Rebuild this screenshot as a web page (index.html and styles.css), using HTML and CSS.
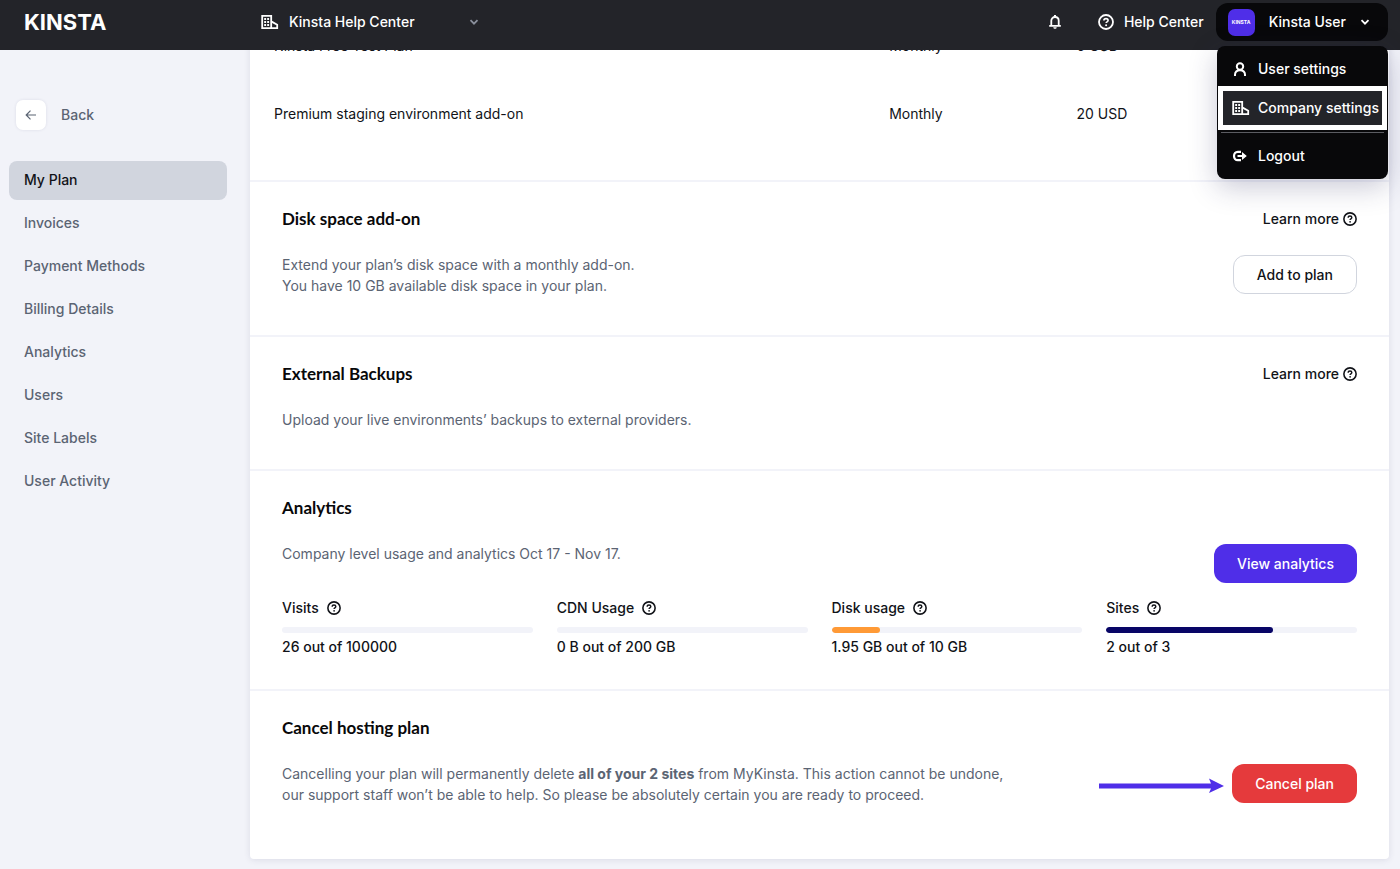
FILE: index.html
```html
<!DOCTYPE html>
<html lang="en">
<head>
    <meta charset="UTF-8">
    <meta name="viewport" content="width=device-width, initial-scale=1.0">
    <title>My Plan - MyKinsta</title>
    <link rel="stylesheet" href="styles.css">
</head>
<body>
    <!-- shared icons -->
    <svg class="sprite" aria-hidden="true">
        <symbol id="icon-company" viewBox="0 0 18 16">
            <path d="M1.2 1.8h9v12.4h-9zM10.2 7.4l6 3.4v3.4h-6" fill="none" stroke="currentColor" stroke-width="1.8"/>
            <path d="M3.2 4h1.900v1.900H3.200zM6.200 4h1.900v1.900H6.200zM3.200 7h1.900v1.900H3.200zM6.200 7h1.900v1.900H6.200zM3.200 10h1.900v1.900H3.200zM6.200 10h1.900v1.900H6.200z" fill="currentColor"/>
        </symbol>
        <symbol id="icon-help" viewBox="0 0 16 16">
            <circle cx="8" cy="8" r="7" fill="none" stroke="currentColor" stroke-width="1.8"/>
            <path d="M5.900 6.600c0-1.200.9-2 2.100-2s2.100.8 2.100 1.800c0 1.400-2 1.400-2 2.700" fill="none" stroke="currentColor" stroke-width="1.600"/>
            <circle cx="8.100" cy="11.200" r="1" fill="currentColor"/>
        </symbol>
        <symbol id="icon-chevron" viewBox="0 0 10 10">
            <path d="M1.5 3.2L5 6.7l3.5-3.5" fill="none" stroke="currentColor" stroke-width="1.8"/>
        </symbol>
    </svg>

    <header class="header">
        <a class="logo" href="#">KINSTA</a>
        <div class="company">
            <svg class="icon-company"><use href="#icon-company"/></svg>
            <select class="company-select" aria-label="Company">
                <option>Kinsta Help Center</option>
            </select>
            <svg class="icon-chevron"><use href="#icon-chevron"/></svg>
        </div>
        <div class="header-right">
            <button class="bell" type="button" aria-label="Notifications">
                <svg width="14" height="16" viewBox="0 0 14 16">
                    <path d="M1.2 11.8h11.6M3.3 11.5V6.7c0-2.2 1.6-3.7 3.7-3.7s3.7 1.5 3.7 3.7v4.8" fill="none" stroke="currentColor" stroke-width="1.8"/>
                    <path d="M6 1h2v2H6zM5.3 13.2h3.4c0 1-.7 1.6-1.7 1.6s-1.7-.6-1.7-1.6z" fill="currentColor"/>
                </svg>
            </button>
            <a class="help-link" href="#">
                <svg class="icon-help"><use href="#icon-help"/></svg>
                Help Center
            </a>
            <div class="user">
                <button class="user-button" type="button" aria-haspopup="true" aria-expanded="true">
                    <span class="avatar">KINSTA</span>
                    <span>Kinsta User</span>
                    <svg class="icon-chevron"><use href="#icon-chevron"/></svg>
                </button>
                <nav class="user-menu" aria-label="User">
                    <a class="menu-item" href="#">
                        <svg class="menu-icon" viewBox="0 0 18 16">
                            <circle cx="8" cy="5.5" r="3.2" fill="none" stroke="currentColor" stroke-width="2"/>
                            <path d="M3 15v-1.200c0-2.700 1.800-4.600 5-4.600s5 1.900 5 4.600V15" fill="none" stroke="currentColor" stroke-width="2"/>
                        </svg>
                        User settings
                    </a>
                    <a class="menu-item menu-item-active" href="#">
                        <svg class="menu-icon"><use href="#icon-company"/></svg>
                        Company settings
                    </a>
                    <a class="menu-item menu-item-logout" href="#">
                        <svg class="menu-icon" viewBox="0 0 18 16">
                            <path d="M9 3.800H5.800C3.500 3.800 2 5.700 2 8s1.500 4.200 3.800 4.200H9" fill="none" stroke="currentColor" stroke-width="2.200"/>
                            <path d="M5.500 7H10V4l4.800 4-4.800 4V9H5.500z" fill="currentColor"/>
                        </svg>
                        Logout
                    </a>
                </nav>
            </div>
        </div>
    </header>

    <div class="page">
        <aside class="sidebar">
            <a class="back" href="#">
                <span class="back-icon">
                    <svg width="12" height="12" viewBox="0 0 12 12">
                        <path d="M11 6H1.5M5.5 1.7L1.2 6l4.300 4.300" fill="none" stroke="currentColor" stroke-width="1.200"/>
                    </svg>
                </span>
                Back
            </a>
            <nav class="side-nav" aria-label="Company">
                <a class="active" href="#" aria-current="page">My Plan</a>
                <a href="#">Invoices</a>
                <a href="#">Payment Methods</a>
                <a href="#">Billing Details</a>
                <a href="#">Analytics</a>
                <a href="#">Users</a>
                <a href="#">Site Labels</a>
                <a href="#">User Activity</a>
            </nav>
        </aside>

        <main class="card">
            <section class="plans">
                <table>
                    <tr>
                        <td class="col-name">Kinsta Free Test Plan</td>
                        <td class="col-period">Monthly</td>
                        <td>0 USD</td>
                    </tr>
                    <tr>
                        <td>Premium staging environment add-on</td>
                        <td>Monthly</td>
                        <td>20 USD</td>
                    </tr>
                </table>
            </section>

            <section class="section">
                <div class="section-head">
                    <h2>Disk space add-on</h2>
                    <a class="learn-more" href="#">Learn more <svg class="icon-hint"><use href="#icon-help"/></svg></a>
                </div>
                <div class="section-body">
                    <p>Extend your plan’s disk space with a monthly add-on.<br>You have 10 GB available disk space in your plan.</p>
                    <button class="btn btn-outline" type="button">Add to plan</button>
                </div>
            </section>

            <section class="section">
                <div class="section-head">
                    <h2>External Backups</h2>
                    <a class="learn-more" href="#">Learn more <svg class="icon-hint"><use href="#icon-help"/></svg></a>
                </div>
                <div class="section-body">
                    <p>Upload your live environments’ backups to external providers.</p>
                </div>
            </section>

            <section class="section section-analytics">
                <div class="section-head">
                    <h2>Analytics</h2>
                </div>
                <div class="section-body">
                    <p>Company level usage and analytics Oct 17 - Nov 17.</p>
                    <button class="btn btn-primary" type="button">View analytics</button>
                </div>
                <div class="stats">
                    <div class="stat">
                        <div class="stat-label">Visits <svg class="icon-hint"><use href="#icon-help"/></svg></div>
                        <div class="bar"></div>
                        <div class="stat-value">26 out of 100000</div>
                    </div>
                    <div class="stat">
                        <div class="stat-label">CDN Usage <svg class="icon-hint"><use href="#icon-help"/></svg></div>
                        <div class="bar"></div>
                        <div class="stat-value">0 B out of 200 GB</div>
                    </div>
                    <div class="stat">
                        <div class="stat-label">Disk usage <svg class="icon-hint"><use href="#icon-help"/></svg></div>
                        <div class="bar"><div class="bar-fill bar-orange" style="width: 19.5%"></div></div>
                        <div class="stat-value">1.95 GB out of 10 GB</div>
                    </div>
                    <div class="stat">
                        <div class="stat-label">Sites <svg class="icon-hint"><use href="#icon-help"/></svg></div>
                        <div class="bar"><div class="bar-fill bar-navy" style="width: 66.67%"></div></div>
                        <div class="stat-value">2 out of 3</div>
                    </div>
                </div>
            </section>

            <section class="section section-cancel">
                <div class="section-head">
                    <h2>Cancel hosting plan</h2>
                </div>
                <div class="section-body">
                    <p>Cancelling your plan will permanently delete <strong>all of your 2 sites</strong> from MyKinsta. This action cannot be undone,<br>our support staff won’t be able to help. So please be absolutely certain you are ready to proceed.</p>
                    <div class="cancel-action">
                        <svg width="125" height="18" viewBox="0 0 125 18" aria-hidden="true">
                            <path d="M0 8.500h112l-2-5L125 11l-15 7 2-4.500H0z" fill="#4f2ee8"/>
                        </svg>
                        <button class="btn btn-danger" type="button">Cancel plan</button>
                    </div>
                </div>
            </section>
        </main>
    </div>
</body>
</html>
```
FILE: styles.css
```css
* { box-sizing: border-box; }
body { margin: 0; font-family: Inter, "Liberation Sans", sans-serif; font-size: 14px; line-height: 20px; color: #111318; background-color: #f2f3f9; }
a { color: inherit; text-decoration: none; }
button, select { font: inherit; color: inherit; cursor: pointer; }
svg { display: block; flex-shrink: 0; }
.sprite { position: absolute; width: 0; height: 0; }

.icon-company { width: 18px; height: 16px; }
.icon-help { width: 16px; height: 16px; }
.icon-hint { width: 14px; height: 14px; overflow: visible; }
.icon-chevron { width: 10px; height: 10px; }

/* header */
.header { position: sticky; top: 0; z-index: 10; display: flex; align-items: center; height: 50px; padding: 0 12px 6px 24px; background-color: #232429; color: #fff; font-weight: 500; }
.logo { width: 237px; font-size: 22px; font-weight: 700; }
.company { display: flex; align-items: center; width: 218px; }
.company-select { flex: 1; appearance: none; margin: 0 0 0 10px; padding: 0; border: none; background: none; }
.company .icon-chevron { color: #8a8f9c; }
.header-right { display: flex; align-items: center; margin-left: auto; }
.bell { padding: 0; border: none; background: none; margin-right: 36px; }
.help-link { display: flex; align-items: center; gap: 10px; margin-right: 12px; }
.user { position: relative; }
.user-button { display: flex; align-items: center; gap: 14px; height: 38px; padding: 0 18px 0 12px; border: none; border-radius: 12px; background-color: #08080a; font-weight: 500; }
.avatar { width: 27px; height: 27px; border-radius: 7px; background-color: #4f2ee8; font-size: 5px; line-height: 27px; font-weight: 700; text-align: center; }
.user-menu { position: absolute; top: 43px; right: 0; width: 171px; padding: 6px 1px; border-radius: 8px; background-color: #08080a; box-shadow: 0 8px 28px rgba(40, 40, 90, 0.25); }
.menu-item { display: flex; align-items: center; gap: 8px; height: 34px; padding-left: 14px; white-space: nowrap; }
.menu-icon { width: 18px; height: 16px; }
.menu-item-active { height: 44px; padding-left: 9px; border: 5px solid #fff; background-color: #232429; }
.menu-item-logout { height: 41px; margin: 2px 3px 0; padding: 6px 0 0 11px; border-top: 1px solid #5b5c62; }

/* layout */
.page { display: flex; align-items: flex-start; padding: 0 11px 10px 0; }
.sidebar { width: 250px; padding: 50px 23px 0 9px; font-weight: 500; color: #5b6473; flex-shrink: 0; }
.back { display: flex; align-items: center; gap: 15px; padding-left: 7px; margin-bottom: 31px; }
.back-icon { display: flex; align-items: center; justify-content: center; width: 30px; height: 30px; border-radius: 7px; background-color: #fff; box-shadow: 0 0 3px rgba(60, 60, 100, 0.12); }
.side-nav { display: flex; flex-direction: column; gap: 4px; }
.side-nav a { padding: 9px 15px 10px; border-radius: 8px; }
.side-nav a.active { background-color: #d1d5de; color: #111318; }

/* starts under the header, as when the page is scrolled */
.card { flex: 1; margin-top: -37px; border-radius: 4px; background-color: #fff; box-shadow: 0 1px 6px rgba(60, 60, 100, 0.12); }

.plans { padding: 0 32px 31px 24px; border-bottom: 2px solid #f2f3f9; }
.plans table { width: 100%; table-layout: fixed; border-collapse: collapse; }
.plans td { height: 68px; padding: 0 0 2px; }
.plans .col-name { width: 56.8%; }
.plans .col-period { width: 17.3%; }

.section { padding: 24px 32px 39px; border-bottom: 2px solid #f2f3f9; }
.section-head { display: flex; align-items: center; justify-content: space-between; margin-bottom: 22px; }
.section-head h2 { margin: 0; font-family: Lato, sans-serif; font-size: 17px; line-height: 26px; font-weight: 700; color: #08080a; }
.section-body { display: flex; align-items: flex-start; justify-content: space-between; }
.section-body p { margin: 0; line-height: 21px; color: #5b6473; }
.learn-more { display: flex; align-items: center; gap: 4px; font-weight: 500; }
.section-analytics { padding-bottom: 32px; }
.section-cancel { padding-bottom: 54px; border-bottom: none; }

.btn { height: 39px; margin: 1px 0; padding: 0 23px; border: none; border-radius: 12px; font-weight: 500; }
.btn-outline { border: 1px solid #d1d5de; background-color: #fff; }
.btn-primary { background-color: #4f2ee8; color: #fff; }
.btn-danger { background-color: #e53a3c; color: #fff; }
.cancel-action { display: flex; align-items: center; gap: 8px; }

.stats { display: grid; grid-template-columns: repeat(4, 1fr); gap: 24px; margin-top: 14px; font-weight: 500; }
.stat-label { display: flex; align-items: center; gap: 8px; margin-bottom: 9px; }
.bar { height: 6px; margin-bottom: 4px; border-radius: 3px; background-color: #f2f3f9; overflow: hidden; }
.bar-fill { height: 6px; border-radius: 3px; }
.bar-orange { background-color: #ff9a36; }
.bar-navy { background-color: #080566; }
```
